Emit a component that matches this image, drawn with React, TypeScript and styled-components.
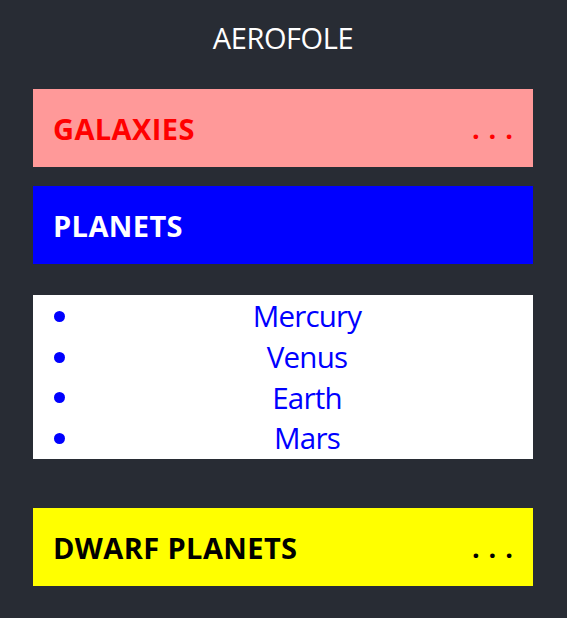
import React from "react";
import styled, { createGlobalStyle } from "styled-components";

const GlobalStyle = createGlobalStyle`
  html, body {
    margin: 0;
    padding: 0;
    background: #282c34;
  }
  body {
    font-family: "Open Sans", "Noto Sans", sans-serif;
  }
  * { box-sizing: border-box; }
`;

const Page = styled.div`
  min-height: 618px;
  background: #282c34;
  padding: 18px 34px 0 33px;
`;

const Container = styled.div`
  width: 500px;
  display: flex;
  flex-direction: column;
`;

const Title = styled.h1`
  margin: 0 0 31px;
  text-align: center;
  color: #ffffff;
  font-size: 29px;
  line-height: 40px;
  font-weight: 400;
  letter-spacing: -0.4px;
`;

type Tone = { bg: string; fg: string };

const Section = styled.div<{ $bg: string; $fg: string; $mt?: number }>`
  height: 78px;
  margin-top: ${(p) => p.$mt ?? 0}px;
  padding: 1px 20px 0;
  display: flex;
  align-items: center;
  justify-content: space-between;
  background: ${(p) => p.$bg};
  color: ${(p) => p.$fg};
`;

const Heading = styled.span`
  font-size: 29px;
  font-weight: 700;
  letter-spacing: 0.4px;
`;

const Dots = styled.span`
  font-size: 27px;
  font-weight: 700;
  letter-spacing: 9px;
  margin-right: -9px;
`;

const List = styled.ul<{ $mt: number }>`
  list-style: none;
  margin: ${(p) => p.$mt}px 0 0;
  padding: 1px 0 0;
  background: #ffffff;
`;

const Item = styled.li`
  display: flex;
  align-items: center;
  height: 40.75px;
  color: #0000ff;
  font-size: 29.5px;
  line-height: 40.75px;
`;

const Bullet = styled.span`
  flex: none;
  width: 11px;
  height: 11px;
  margin: 0 16px 0 21px;
  border-radius: 50%;
  background: #0000ff;
`;

const ItemText = styled.span`
  flex: 1;
  text-align: center;
  letter-spacing: -0.8px;
`;

const tones: Record<string, Tone> = {
  galaxies: { bg: "#ff9999", fg: "#ff0000" },
  planets: { bg: "#0000ff", fg: "#ffffff" },
  dwarf: { bg: "#ffff00", fg: "#000000" },
};

const planets = ["Mercury", "Venus", "Earth", "Mars"];

export default function App() {
  return (
    <>
      <GlobalStyle />
      <Page>
        <Container>
          <Title>AEROFOLE</Title>
          <Section $bg={tones.galaxies.bg} $fg={tones.galaxies.fg}>
            <Heading>GALAXIES</Heading>
            <Dots>...</Dots>
          </Section>
          <Section $bg={tones.planets.bg} $fg={tones.planets.fg} $mt={19}>
            <Heading>PLANETS</Heading>
          </Section>
          <List $mt={31}>
            {planets.map((p) => (
              <Item key={p}>
                <Bullet />
                <ItemText>{p}</ItemText>
              </Item>
            ))}
          </List>
          <Section $bg={tones.dwarf.bg} $fg={tones.dwarf.fg} $mt={49}>
            <Heading>DWARF PLANETS</Heading>
            <Dots>...</Dots>
          </Section>
        </Container>
      </Page>
    </>
  );
}
